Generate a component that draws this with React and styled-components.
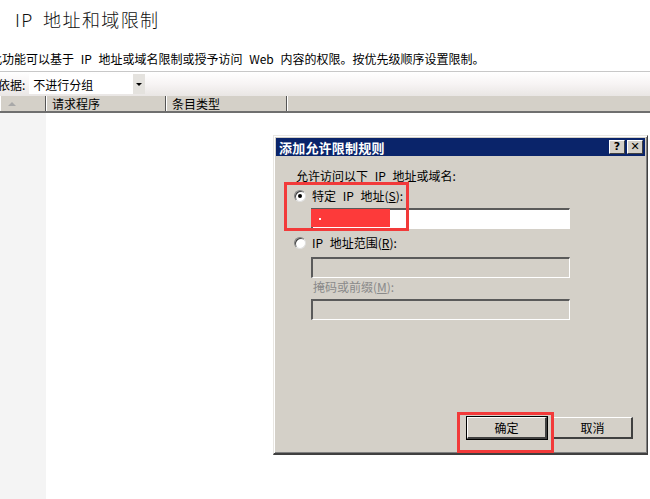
import React from 'react';
import styled, { createGlobalStyle } from 'styled-components';

const GlobalStyle = createGlobalStyle`
  html, body {
    margin: 0;
    padding: 0;
    background: #fff;
  }
  body {
    font-family: "Noto Sans CJK SC", "DejaVu Sans", sans-serif;
    color: #000;
  }
`;

const Page = styled.div`
  position: relative;
  width: 650px;
  height: 499px;
  overflow: hidden;
  display: flex;
  flex-direction: column;
  background: #fff;
`;

const Title = styled.h1`
  margin: 0;
  padding: 8px 0 0 15px;
  font-size: 18px;
  line-height: 22px;
  font-weight: 300;
  letter-spacing: 1.4px;
  word-spacing: 4px;
  color: #111;
  white-space: nowrap;
`;

const Description = styled.p`
  margin: 21px 0 0 -10px;
  font-size: 12px;
  line-height: 16px;
  word-spacing: 4px;
  white-space: nowrap;
`;

const Toolbar = styled.div`
  margin-top: 4px;
  height: 24px;
  display: flex;
  align-items: center;
  gap: 4px;
  border-top: 1px solid #c8c8c8;
  background: linear-gradient(#ffffff, #f7f4f4 50%, #e9e6e4);
`;

const GroupLabel = styled.span`
  margin-left: -2px;
  font-size: 12px;
  white-space: nowrap;
`;

const Select = styled.div`
  width: 116px;
  height: 20px;
  display: flex;
  align-items: center;
  justify-content: space-between;
  background: #fff;
  font-size: 12px;
  padding-left: 4px;
  box-sizing: border-box;
`;

const SelectArrow = styled.div`
  width: 12px;
  height: 20px;
  background: #e4e2de;
  display: flex;
  align-items: center;
  justify-content: center;

  &::after {
    content: '';
    border-left: 3px solid transparent;
    border-right: 3px solid transparent;
    border-top: 3px solid #000;
  }
`;

const HeaderRow = styled.div`
  height: 15px;
  display: flex;
  background: #d4d0c8;
  border-bottom: 2px solid #6f6f6f;
`;

const HeaderCell = styled.div`
  width: ${(p) => p.$w}px;
  flex: ${(p) => (p.$fill ? 1 : 'none')};
  box-sizing: border-box;
  padding-left: 6px;
  font-size: 12px;
  line-height: 15px;
  border-right: ${(p) => (p.$fill ? 'none' : '1px solid #555')};
  box-shadow: inset 1px 0 0 #fff;
  display: flex;
  align-items: center;
`;

const SortArrow = styled.span`
  margin-left: 2px;
  border-left: 4px solid transparent;
  border-right: 4px solid transparent;
  border-bottom: 4px solid #a8a8a8;
`;

const ListBody = styled.div`
  flex: 1;
  display: flex;
`;

const SideColumn = styled.div`
  width: 46px;
  background: #f4f4f4;
`;

const Dialog = styled.div`
  position: absolute;
  left: 273px;
  top: 135px;
  width: 375px;
  height: 320px;
  box-sizing: border-box;
  background: #d4d0c8;
  border-top: 1px solid #e8e6e2;
  border-left: 1px solid #e8e6e2;
  border-right: 1px solid #404040;
  border-bottom: 2px solid #404040;
  box-shadow: inset 1px 1px 0 #fff, inset -1px -1px 0 #808080;
  padding: 2px;
  display: flex;
  flex-direction: column;
`;

const TitleBar = styled.div`
  height: 18px;
  background: #0a246a;
  display: flex;
  align-items: center;
  justify-content: space-between;
  padding: 0 2px 0 3px;
`;

const TitleText = styled.span`
  color: #fff;
  font-size: 13px;
  font-weight: 700;
  letter-spacing: 0.2px;
`;

const TitleButtons = styled.div`
  display: flex;
  gap: 2px;
`;

const CaptionButton = styled.div`
  width: 16px;
  height: 14px;
  box-sizing: border-box;
  background: #d4d0c8;
  border-top: 1px solid #fff;
  border-left: 1px solid #fff;
  border-right: 1px solid #404040;
  border-bottom: 1px solid #404040;
  font-family: "DejaVu Sans", sans-serif;
  font-weight: 700;
  font-size: 11px;
  line-height: 12px;
  text-align: center;
`;

const Body = styled.div`
  flex: 1;
  display: flex;
  flex-direction: column;
  padding: 12px 0 0 18px;
  font-size: 12px;
  word-spacing: 4px;
`;

const Line = styled.div`
  line-height: 16px;
  height: 16px;
  white-space: nowrap;
  color: ${(p) => (p.$disabled ? '#8a8a8a' : '#000')};
  margin-top: ${(p) => p.$mt || 0}px;
  padding-left: ${(p) => p.$indent || 0}px;
  display: flex;
  align-items: center;
  gap: 6px;
`;

const Radio = styled.span`
  width: 12px;
  height: 12px;
  box-sizing: border-box;
  border-radius: 50%;
  background: #fff;
  border: 1px solid #808080;
  border-right-color: #e0e0e0;
  border-bottom-color: #e0e0e0;
  box-shadow: inset 1px 1px 0 #404040;
  display: flex;
  align-items: center;
  justify-content: center;

  &::after {
    content: '';
    width: 4px;
    height: 4px;
    border-radius: 50%;
    background: ${(p) => (p.$checked ? '#000' : 'transparent')};
  }
`;

const Input = styled.div`
  margin: ${(p) => p.$mt || 0}px 0 0 17px;
  width: 259px;
  height: 21px;
  box-sizing: border-box;
  background: ${(p) => (p.$disabled ? '#d4d0c8' : '#fff')};
  border-top: 2px solid #5a5a5a;
  border-left: 2px solid #5a5a5a;
  border-right: 1px solid #fff;
  border-bottom: 1px solid #fff;
`;

const Footer = styled.div`
  margin-top: auto;
  display: flex;
  justify-content: flex-end;
  gap: 6px;
  padding: 0 12px 12px 0;
`;

const Button = styled.button`
  width: 80px;
  height: 22px;
  box-sizing: border-box;
  padding: 0;
  background: #d4d0c8;
  font-family: "Noto Sans CJK SC", sans-serif;
  font-size: 12px;
  color: #000;
  border-top: 1px solid #fff;
  border-left: 1px solid #fff;
  border-right: 2px solid #404040;
  border-bottom: 2px solid #404040;
  outline: ${(p) => (p.$default ? '1px solid #000' : 'none')};
  outline-offset: 0;
`;

const Highlight = styled.div`
  position: absolute;
  left: ${(p) => p.$x}px;
  top: ${(p) => p.$y}px;
  width: ${(p) => p.$w}px;
  height: ${(p) => p.$h}px;
  box-sizing: border-box;
  border: 3px solid #f23a3a;
  pointer-events: none;
`;

const Redaction = styled.div`
  position: absolute;
  left: 37px;
  top: 73px;
  width: 79px;
  height: 18px;
  background: #fd3a3a;

  &::after {
    content: '';
    position: absolute;
    left: 8px;
    top: 9px;
    width: 2px;
    height: 2px;
    background: #fff;
  }
`;

export default function App() {
  return (
    <>
      <GlobalStyle />
      <Page>
        <Title>IP 地址和域限制</Title>
        <Description>
          此功能可以基于 IP 地址或域名限制或授予访问 Web 内容的权限。按优先级顺序设置限制。
        </Description>
        <Toolbar>
          <GroupLabel>依据:</GroupLabel>
          <Select>
            不进行分组
            <SelectArrow />
          </Select>
        </Toolbar>
        <HeaderRow>
          <HeaderCell $w={46}>
            <SortArrow />
          </HeaderCell>
          <HeaderCell $w={120}>请求程序</HeaderCell>
          <HeaderCell $w={121}>条目类型</HeaderCell>
          <HeaderCell $fill />
        </HeaderRow>
        <ListBody>
          <SideColumn />
        </ListBody>

        <Dialog>
          <TitleBar>
            <TitleText>添加允许限制规则</TitleText>
            <TitleButtons>
              <CaptionButton>?</CaptionButton>
              <CaptionButton>✕</CaptionButton>
            </TitleButtons>
          </TitleBar>
          <Body>
            <Line $indent={2}>允许访问以下 IP 地址或域名:</Line>
            <Line $mt={4}>
              <Radio $checked />
              <span>
                特定 IP 地址(<u>S</u>):
              </span>
            </Line>
            <Input $mt={4} />
            <Line $mt={6}>
              <Radio />
              <span>
                IP 地址范围(<u>R</u>):
              </span>
            </Line>
            <Input $mt={6} $disabled />
            <Line $disabled $indent={19} $mt={1}>
              <span>
                掩码或前缀(<u>M</u>):
              </span>
            </Line>
            <Input $mt={4} $disabled />
          </Body>
          <Footer>
            <Button $default>确定</Button>
            <Button>取消</Button>
          </Footer>
          <Redaction />
          <Highlight $x={10} $y={46} $w={125} $h={49} />
          <Highlight $x={183} $y={276} $w={97} $h={41} />
        </Dialog>
      </Page>
    </>
  );
}
